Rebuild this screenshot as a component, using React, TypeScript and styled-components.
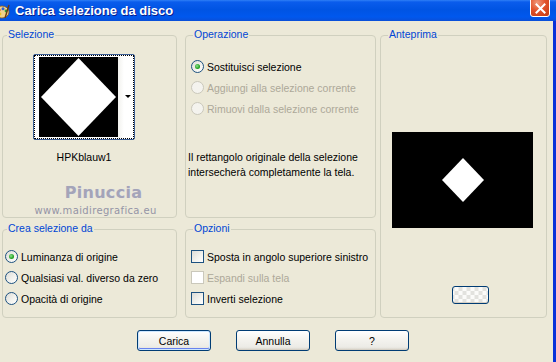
import React from 'react'
import styled, { createGlobalStyle, css } from 'styled-components'

const GlobalStyle = createGlobalStyle`
	html, body {
		margin: 0;
		padding: 0;
		background: #ece9d8;
	}
	body {
		font-family: 'Liberation Sans', Arial, sans-serif;
		font-size: 10.5px;
		color: #000;
	}
`

const Window = styled.div`
	width: 556px;
	height: 362px;
	display: flex;
	flex-direction: column;
	overflow: hidden;
	background: #ece9d8;
`

const TitleBar = styled.div`
	height: 21px;
	flex: none;
	display: flex;
	align-items: flex-start;
	background: linear-gradient(
		180deg,
		#2f7ff6 0px,
		#0a5cec 2px,
		#0054e3 45%,
		#0058ee 80%,
		#0a4fd8 100%
	);
`

const TitleIcon = styled.svg`
	flex: none;
	margin: 3px 0 0 -6px;
`

const TitleText = styled.span`
	margin: 3px 0 0 5px;
	font-family: 'Liberation Sans', Arial, sans-serif;
	font-weight: bold;
	font-size: 13px;
	line-height: 15px;
	color: #fff;
	text-shadow: 1px 1px 0 #0a1c8c;
	white-space: nowrap;
`

const CloseButton = styled.div`
	flex: none;
	margin: -4px 6px 0 auto;
	width: 20px;
	height: 21px;
	box-sizing: border-box;
	border: 1px solid #fff;
	border-radius: 3px;
	background: radial-gradient(circle at 35% 30%, #f09a7c 0%, #e2522a 45%, #c23a10 100%);
	display: flex;
	align-items: center;
	justify-content: center;
	padding-top: 3px;
`

const Body = styled.div`
	flex: 1;
	display: flex;
	flex-direction: column;
	padding: 14px 0 0 2px;
	border-right: 3px solid #0831d9;
`

const Panels = styled.div`
	display: flex;
	align-items: flex-start;
	gap: 4px;
`

const LeftGrid = styled.div`
	display: grid;
	grid-template-columns: 175px 191px;
	grid-template-rows: 183px 89px;
	column-gap: 8px;
	row-gap: 11px;
`

const Group = styled.div<{ $w?: number; $h?: number }>`
	position: relative;
	box-sizing: border-box;
	border: 1px solid #d0d0bf;
	border-radius: 4px;
	${p =>
		p.$w &&
		css`
			width: ${p.$w}px;
		`}
	${p =>
		p.$h &&
		css`
			height: ${p.$h}px;
		`}
`

const Legend = styled.span<{ $inset: number }>`
	position: absolute;
	top: -8px;
	left: ${p => p.$inset}px;
	padding: 0 1px;
	background: #ece9d8;
	color: #0046d5;
	line-height: 13px;
	white-space: nowrap;
`

const OptionList = styled.div<{ $top: number; $left: number }>`
	display: flex;
	flex-direction: column;
	padding: ${p => p.$top}px 0 0 ${p => p.$left}px;
`

const OptionRow = styled.div<{ $disabled?: boolean }>`
	display: flex;
	align-items: center;
	gap: 3px;
	height: 21px;
	white-space: nowrap;
	color: ${p => (p.$disabled ? '#aca899' : '#000')};
`

const RadioMark = styled.span<{ $checked?: boolean; $disabled?: boolean }>`
	flex: none;
	width: 13px;
	height: 13px;
	box-sizing: border-box;
	border-radius: 50%;
	border: 1px solid ${p => (p.$disabled ? '#cac8bb' : '#1c5180')};
	background: ${p =>
		p.$disabled
			? '#f4f3ee'
			: 'linear-gradient(135deg, #dcdcd7 0%, #f3f3ef 60%, #ffffff 100%)'};
	display: flex;
	align-items: center;
	justify-content: center;
	&::after {
		content: '';
		width: 5px;
		height: 5px;
		border-radius: 50%;
		background: radial-gradient(circle at 40% 40%, #8fe28f 0%, #21a121 60%, #1a8a1a 100%);
		display: ${p => (p.$checked ? 'block' : 'none')};
	}
`

const CheckMark = styled.span<{ $disabled?: boolean }>`
	flex: none;
	width: 13px;
	height: 13px;
	box-sizing: border-box;
	border: 1px solid ${p => (p.$disabled ? '#cac8bb' : '#1c5180')};
	background: ${p =>
		p.$disabled ? '#ffffff' : 'linear-gradient(135deg, #dcdcd7 0%, #f3f3ef 60%, #ffffff 100%)'};
`

const SelectionColumn = styled.div`
	display: flex;
	flex-direction: column;
	align-items: center;
	width: 102px;
	margin: 18px 0 0 30px;
`

const Thumb = styled.div`
	width: 102px;
	height: 86px;
	box-sizing: border-box;
	border: 1px solid #3a5d93;
	border-radius: 2px;
	background: #fff;
	padding: 0;
`

const FocusRing = styled.div`
	height: 100%;
	box-sizing: border-box;
	border: 1px dotted #000;
	display: flex;
	padding: 1px 0 0 4px;
`

const ThumbImage = styled.div`
	width: 79px;
	height: 80px;
	background: #000;
	flex: none;
`

const ArrowStrip = styled.div`
	flex: 1;
	display: flex;
	align-items: center;
	justify-content: flex-end;
	padding: 0 2px 2px 0;
	background: linear-gradient(90deg, #f2f2ee, #ffffff 40%);
	&::after {
		content: '';
		border-left: 3px solid transparent;
		border-right: 3px solid transparent;
		border-top: 3px solid #000;
	}
`

const FileName = styled.div`
	margin-top: 11px;
	line-height: 13px;
	white-space: nowrap;
`

const Watermark = styled.div`
	display: flex;
	flex-direction: column;
	align-items: center;
	margin: 20px 0 0 28px;
`

const WatermarkName = styled.span`
	font-family: 'DejaVu Sans', sans-serif;
	font-size: 16px;
	font-weight: bold;
	letter-spacing: 0.3px;
	line-height: 18px;
	color: #a4a4b8;
	text-shadow: 0 0 1px #e0e0ea;
`

const WatermarkUrl = styled.span`
	font-family: 'DejaVu Sans', sans-serif;
	font-size: 10px;
	letter-spacing: 0.35px;
	line-height: 11px;
	margin: 3px 0 0 -16px;
	color: #9494a6;
`

const Note = styled.p`
	margin: 31px 0 0 2px;
	line-height: 15px;
`

const PreviewArea = styled.div`
	display: flex;
	flex-direction: column;
	padding: 96px 0 0 11px;
`

const PreviewImage = styled.div`
	width: 141px;
	height: 96px;
	background: #000;
`

const XpButton = styled.button<{ $primary?: boolean; $w?: number; $h?: number }>`
	width: ${p => p.$w ?? 74}px;
	height: ${p => p.$h ?? 21}px;
	box-sizing: border-box;
	border: 1px solid #003c74;
	border-radius: 3px;
	padding: 0;
	font-family: 'Liberation Sans', Arial, sans-serif;
	font-size: 10.5px;
	color: #000;
	background: linear-gradient(180deg, #ffffff 0%, #f5f4f0 40%, #ecebe6 85%, #d6d0c5 100%);
	box-shadow: ${p =>
		p.$primary
			? 'inset 0 0 0 1px #cee7ff, inset 0 -1px 0 1px #6982ee'
			: 'inset 0 -1px 0 0 #d6d0c5'};
`

const CheckerButton = styled(XpButton)`
	margin: 58px 0 0 60px;
	background: repeating-conic-gradient(#e2e2de 0% 25%, #fbfbf9 0% 50%) 50% 50% / 8px 8px;
`

const ButtonRow = styled.div`
	display: flex;
	gap: 25px;
	margin: 12px 0 0 135px;
`

function Radio({ label, checked, disabled }: { label: string; checked?: boolean; disabled?: boolean }) {
	return (
		<OptionRow $disabled={disabled}>
			<RadioMark $checked={checked} $disabled={disabled} />
			<span>{label}</span>
		</OptionRow>
	)
}

function Check({ label, disabled }: { label: string; disabled?: boolean }) {
	return (
		<OptionRow $disabled={disabled}>
			<CheckMark $disabled={disabled} />
			<span>{label}</span>
		</OptionRow>
	)
}

const AppIcon = () => (
	<TitleIcon width="16" height="16" viewBox="0 0 16 16">
		<ellipse cx="8" cy="9" rx="7" ry="6" fill="#f2d28a" stroke="#8a5a1c" strokeWidth="0.8" />
		<circle cx="5" cy="7" r="1.6" fill="#d8321e" />
		<circle cx="9" cy="5.8" r="1.5" fill="#2a62d8" />
		<circle cx="12" cy="8" r="1.4" fill="#2fa03a" />
		<circle cx="6" cy="11" r="1.4" fill="#f0c020" />
		<path d="M11 15 L15 2" stroke="#6a3a10" strokeWidth="1.4" />
	</TitleIcon>
)

export default function App() {
	return (
		<Window>
			<GlobalStyle />
			<TitleBar>
				<AppIcon />
				<TitleText>Carica selezione da disco</TitleText>
				<CloseButton>
					<svg width="11" height="11" viewBox="0 0 11 11">
						<path d="M1.5 1.5 L9.5 9.5 M9.5 1.5 L1.5 9.5" stroke="#fff" strokeWidth="2" strokeLinecap="square" />
					</svg>
				</CloseButton>
			</TitleBar>
			<Body>
				<Panels>
					<LeftGrid>
						<Group>
							<Legend $inset={4}>Selezione</Legend>
							<SelectionColumn>
								<Thumb>
									<FocusRing>
										<ThumbImage>
											<svg width="79" height="80" viewBox="0 0 79 80">
												<polygon points="39.5,1 77,40 39.5,79 2,40" fill="#fff" />
											</svg>
										</ThumbImage>
										<ArrowStrip />
									</FocusRing>
								</Thumb>
								<FileName>HPKblauw1</FileName>
							</SelectionColumn>
							<Watermark>
								<WatermarkName>Pinuccia</WatermarkName>
								<WatermarkUrl>www.maidiregrafica.eu</WatermarkUrl>
							</Watermark>
						</Group>
						<Group>
							<Legend $inset={7}>Operazione</Legend>
							<OptionList $top={20} $left={5}>
								<Radio label="Sostituisci selezione" checked />
								<Radio label="Aggiungi alla selezione corrente" disabled />
								<Radio label="Rimuovi dalla selezione corrente" disabled />
							</OptionList>
							<Note>
								Il rettangolo originale della selezione
								<br />
								intersecherà completamente la tela.
							</Note>
						</Group>
						<Group>
							<Legend $inset={4}>Crea selezione da</Legend>
							<OptionList $top={16} $left={2}>
								<Radio label="Luminanza di origine" checked />
								<Radio label="Qualsiasi val. diverso da zero" />
								<Radio label="Opacità di origine" />
							</OptionList>
						</Group>
						<Group>
							<Legend $inset={7}>Opzioni</Legend>
							<OptionList $top={16} $left={5}>
								<Check label="Sposta in angolo superiore sinistro" />
								<Check label="Espandi sulla tela" disabled />
								<Check label="Inverti selezione" />
							</OptionList>
						</Group>
					</LeftGrid>
					<Group $w={167} $h={283}>
						<Legend $inset={7}>Anteprima</Legend>
						<PreviewArea>
							<PreviewImage>
								<svg width="141" height="96" viewBox="0 0 141 96">
									<polygon points="71,26 92,48 71,70 50,48" fill="#fff" />
								</svg>
							</PreviewImage>
							<CheckerButton $w={37} $h={18} />
						</PreviewArea>
					</Group>
				</Panels>
				<ButtonRow>
					<XpButton $primary>Carica</XpButton>
					<XpButton>Annulla</XpButton>
					<XpButton>?</XpButton>
				</ButtonRow>
			</Body>
		</Window>
	)
}
